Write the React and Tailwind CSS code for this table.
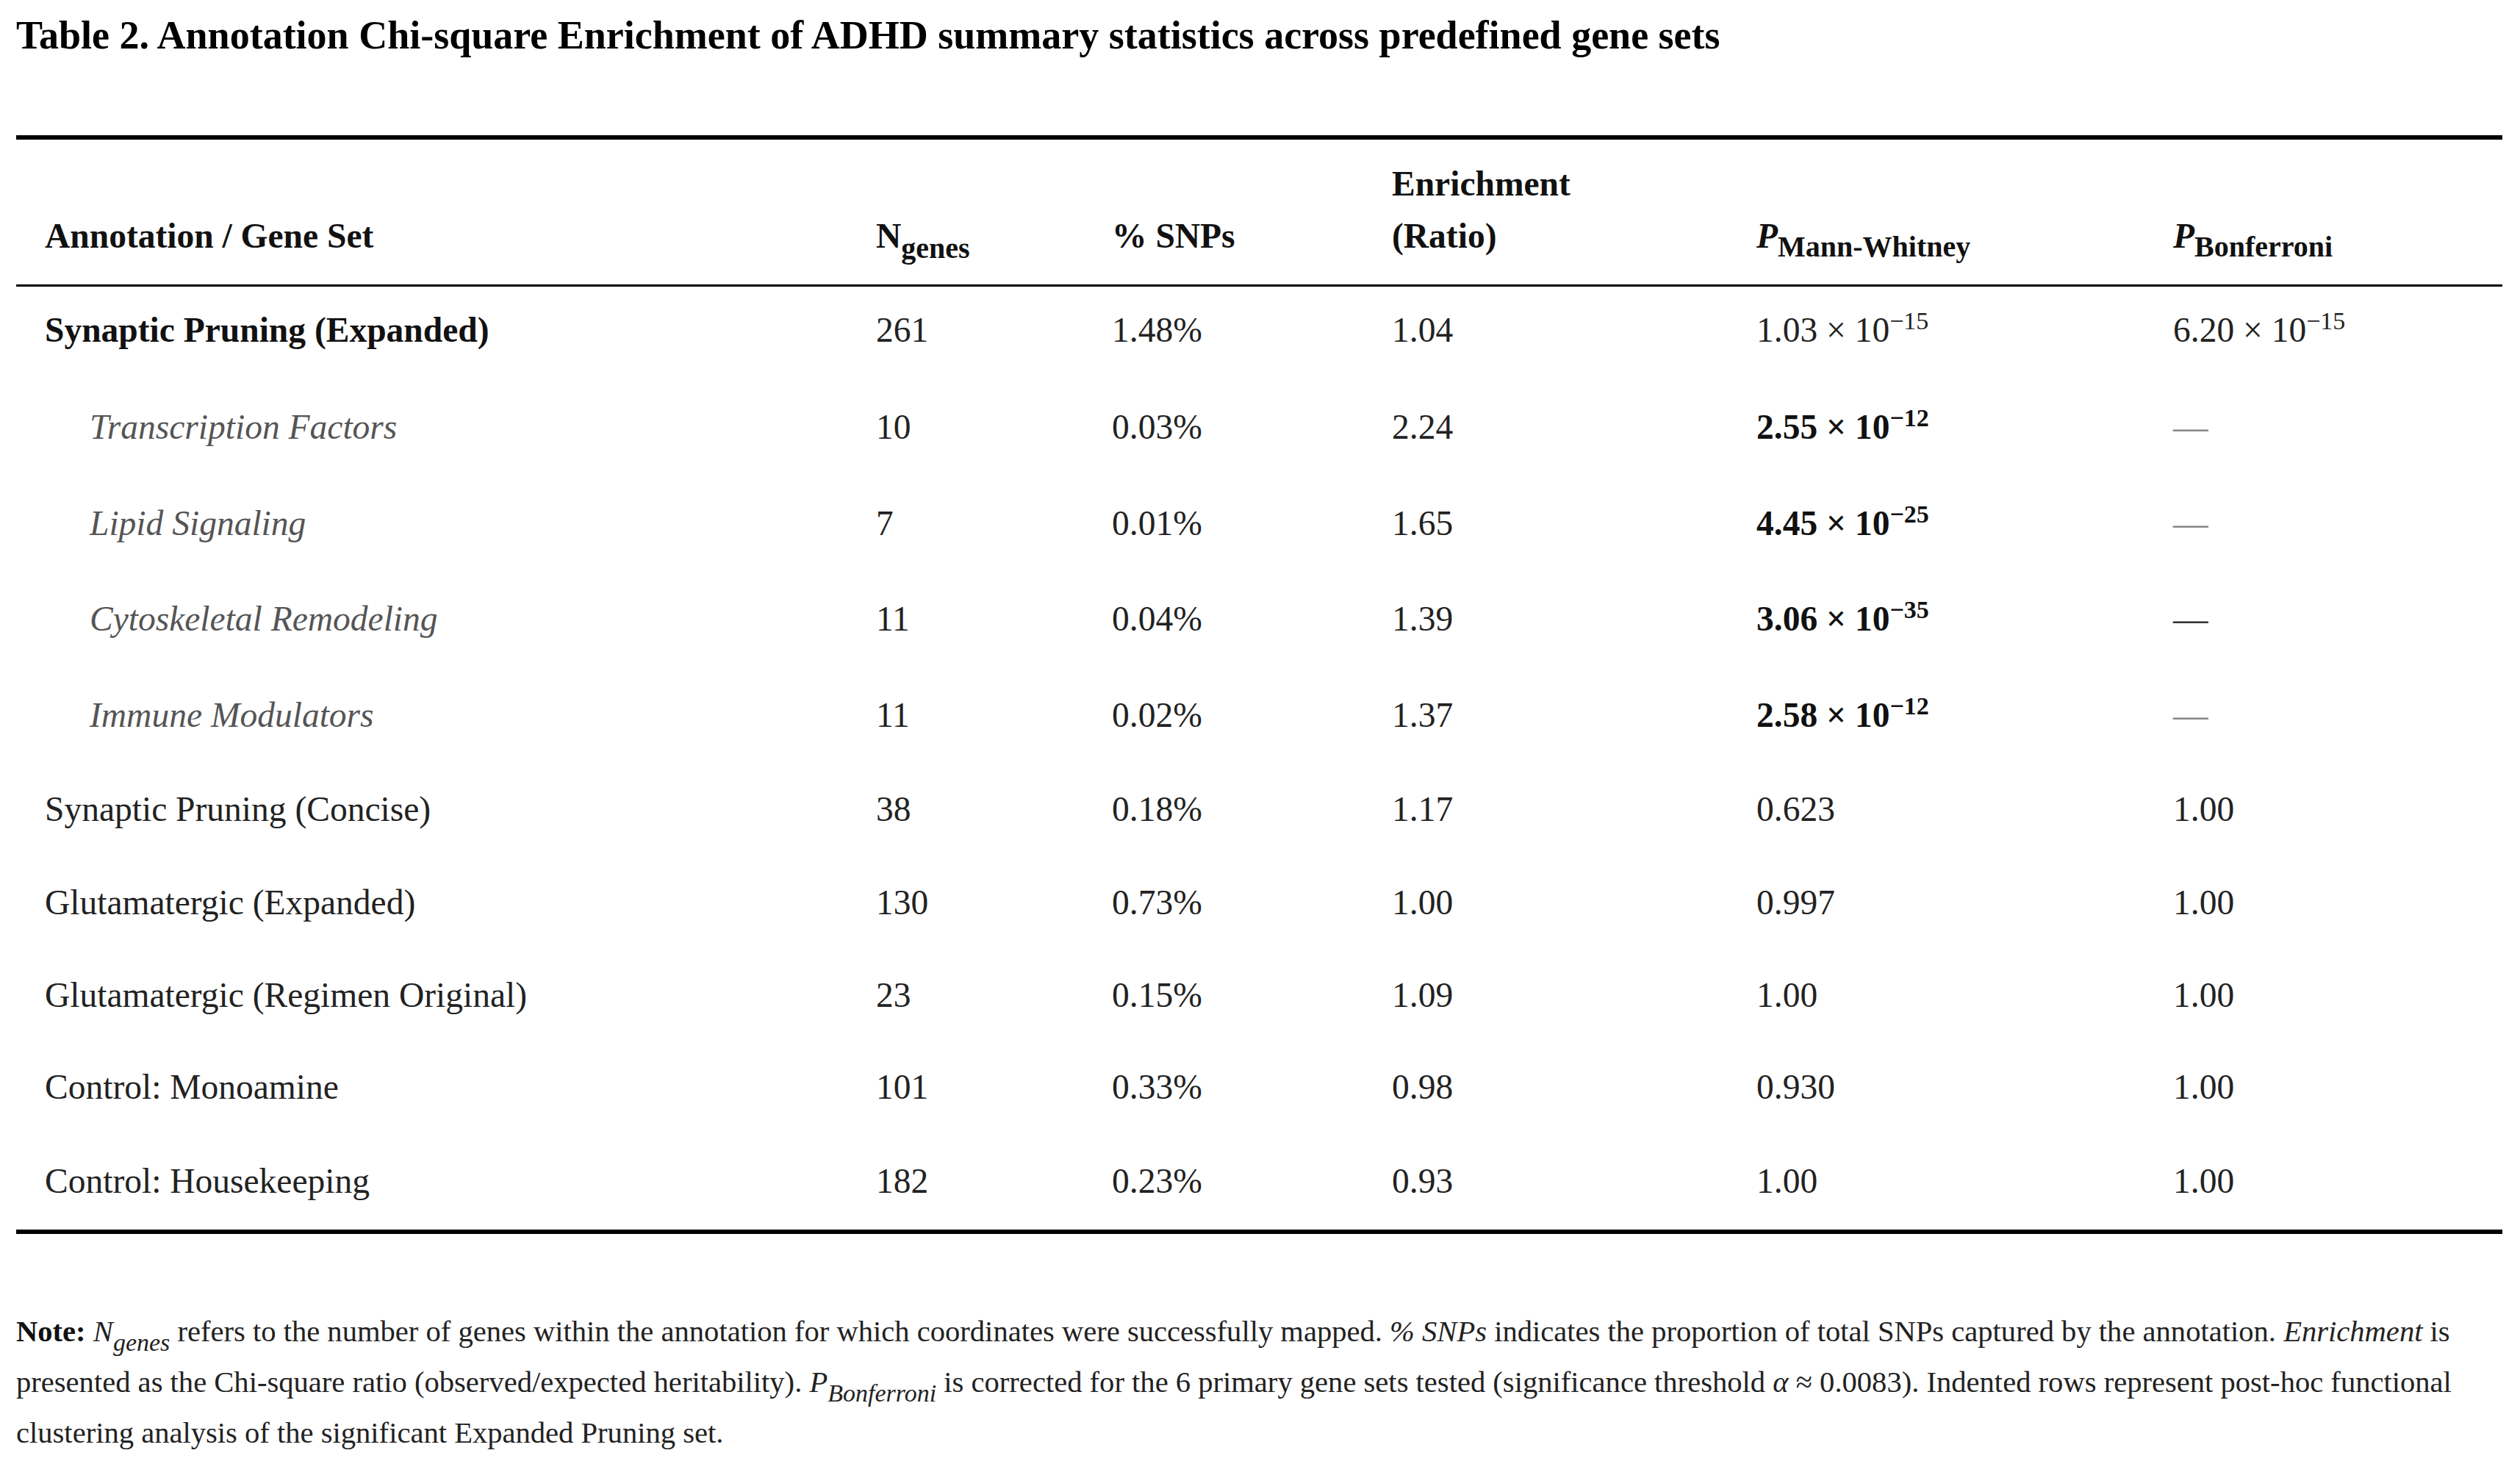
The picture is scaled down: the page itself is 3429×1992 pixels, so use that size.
const rows = [
  { name: 'Synaptic Pruning (Expanded)', kind: 'bold', n: '261', snps: '1.48%', enr: '1.04', pmw: ['1.03', '−15'], pbon: ['6.20', '−15'], h: 'h-[126px] [&>td]:pb-[8px]' },
  { name: 'Transcription Factors', kind: 'sub', n: '10', snps: '0.03%', enr: '2.24', pmw: ['2.55', '−12'], bold: true, dash: 'light', h: 'h-[131px]' },
  { name: 'Lipid Signaling', kind: 'sub', n: '7', snps: '0.01%', enr: '1.65', pmw: ['4.45', '−25'], bold: true, dash: 'light', h: 'h-[130px]' },
  { name: 'Cytoskeletal Remodeling', kind: 'sub', n: '11', snps: '0.04%', enr: '1.39', pmw: ['3.06', '−35'], bold: true, dash: 'dark', h: 'h-[131px]' },
  { name: 'Immune Modulators', kind: 'sub', n: '11', snps: '0.02%', enr: '1.37', pmw: ['2.58', '−12'], bold: true, dash: 'light', h: 'h-[130px]' },
  { name: 'Synaptic Pruning (Concise)', n: '38', snps: '0.18%', enr: '1.17', pmw: '0.623', pbon: '1.00', h: 'h-[127px]' },
  { name: 'Glutamatergic (Expanded)', n: '130', snps: '0.73%', enr: '1.00', pmw: '0.997', pbon: '1.00', h: 'h-[126px]' },
  { name: 'Glutamatergic (Regimen Original)', n: '23', snps: '0.15%', enr: '1.09', pmw: '1.00', pbon: '1.00', h: 'h-[126px]' },
  { name: 'Control: Monoamine', n: '101', snps: '0.33%', enr: '0.98', pmw: '0.930', pbon: '1.00', h: 'h-[125px]' },
  { name: 'Control: Housekeeping', n: '182', snps: '0.23%', enr: '0.93', pmw: '1.00', pbon: '1.00', h: 'h-[131px]' }
];

function Sci({ value, bold }) {
  if (typeof value === 'string') return value;
  return (
    <span className={bold ? 'font-bold text-[#111]' : ''}>
      {value[0]} × 10<sup className="text-[34px]">{value[1]}</sup>
    </span>
  );
}

function Cell({ children, className = '' }) {
  return <td className={`align-middle pl-[39px] ${className}`}>{children}</td>;
}

export default function App() {
  return (
    <div className="min-h-screen bg-white px-[22px] pt-[16px] font-['Liberation_Serif',serif] text-[#222]">
      <h1 className="text-[54px] font-bold leading-[65px] text-black">
        Table 2. Annotation Chi-square Enrichment of ADHD summary statistics across predefined gene sets
      </h1>

      <div className="mt-[103px] w-[3383px] border-y-[6px] border-black">
        <table className="w-full table-fixed border-separate border-spacing-0 text-[47.5px] leading-[71px]">
          <colgroup>
            <col className="w-[1131px]" />
            <col className="w-[321px]" />
            <col className="w-[381px]" />
            <col className="w-[496px]" />
            <col className="w-[567px]" />
            <col className="w-[487px]" />
          </colgroup>
          <thead>
            <tr>
              {[
                'Annotation / Gene Set',
                <>N<sub className="text-[40px] bottom-[-14px]">genes</sub></>,
                '% SNPs',
                <>Enrichment<br />(Ratio)</>,
                <><i>P</i><sub className="text-[40px] bottom-[-12px]">Mann-Whitney</sub></>,
                <><i>P</i><sub className="text-[40px] bottom-[-12px]">Bonferroni</sub></>
              ].map((label, i) => (
                <th
                  key={i}
                  className="h-[200px] border-b-[3px] border-black pl-[39px] pb-[30px] text-left align-bottom font-bold text-[#111]"
                >
                  {label}
                </th>
              ))}
            </tr>
          </thead>
          <tbody>
            {rows.map((row) => (
              <tr key={row.name} className={row.h}>
                <Cell
                  className={
                    row.kind === 'bold'
                      ? 'font-bold text-[#111]'
                      : row.kind === 'sub'
                        ? 'pl-[100px] italic text-[#555]'
                        : ''
                  }
                >
                  {row.name}
                </Cell>
                <Cell>{row.n}</Cell>
                <Cell>{row.snps}</Cell>
                <Cell>{row.enr}</Cell>
                <Cell>
                  <Sci value={row.pmw} bold={row.bold} />
                </Cell>
                <Cell>
                  {row.dash ? (
                    <span className={row.dash === 'dark' ? 'text-[#333]' : 'text-[#8a8a8a]'}>—</span>
                  ) : (
                    <Sci value={row.pbon} />
                  )}
                </Cell>
              </tr>
            ))}
          </tbody>
        </table>
      </div>

      <p className="mt-[98px] whitespace-nowrap text-[40.6px] leading-[69px] text-[#222]">
        <b className="text-[#111]">Note:</b> <i>N</i>
        <sub className="bottom-[-13px] text-[34px] italic">genes</sub> refers to the number of genes within the
        annotation for which coordinates were successfully mapped. <i>% SNPs</i> indicates the proportion of total
        SNPs captured by the annotation. <i>Enrichment</i> is
        <br />
        presented as the Chi-square ratio (observed/expected heritability). <i>P</i>
        <sub className="bottom-[-13px] text-[34px] italic">Bonferroni</sub> is corrected for the 6 primary gene sets
        tested (significance threshold <i>α</i> ≈ 0.0083). Indented rows represent post-hoc functional
        <br />
        clustering analysis of the significant Expanded Pruning set.
      </p>
    </div>
  );
}
